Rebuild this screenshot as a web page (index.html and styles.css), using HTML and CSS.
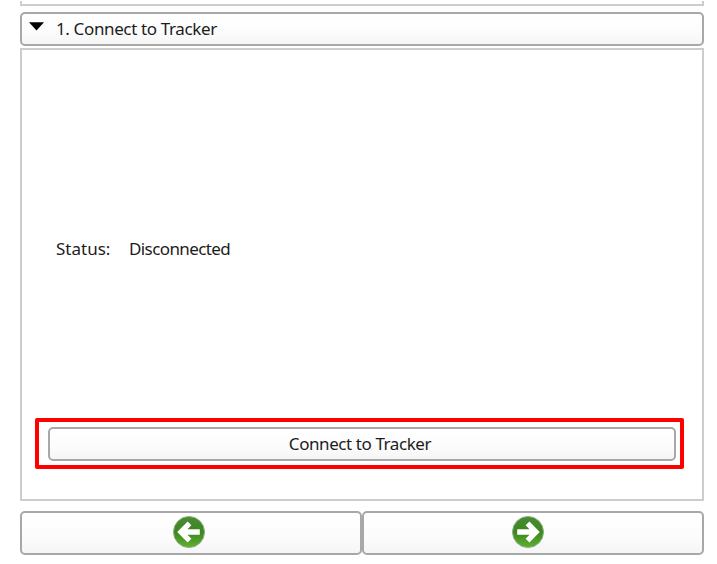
FILE: index.html
```html
<!DOCTYPE html>
<html lang="en">
<head>
<meta charset="utf-8">
<title>Connect to Tracker</title>
<link rel="stylesheet" href="styles.css">
</head>
<body>
<main class="wizard">
  <div class="previous-panel"></div>
  <button class="box header">
    <svg class="caret" width="15" height="9" viewBox="0 0 15 9"><path d="M0 .3h15L7.5 8.5z"/></svg>
    <span class="label title">1. Connect to Tracker</span>
  </button>
  <section class="panel">
    <div class="status">
      <span class="label status-name">Status:</span>
      <span class="label status-value">Disconnected</span>
    </div>
    <div class="highlight">
      <button class="box connect"><span class="label">Connect to Tracker</span></button>
    </div>
  </section>
  <nav class="navigation">
    <button class="box nav-button" aria-label="Previous">
      <svg class="arrow" width="34" height="34" viewBox="0 0 34 34">
        <defs><linearGradient id="green" x2="0" y2="1"><stop stop-color="#4a8a34"/><stop offset=".5" stop-color="#3b871e"/><stop offset="1" stop-color="#60b032"/></linearGradient></defs>
        <circle cx="17" cy="17" r="15.5" fill="url(#green)" stroke="#8fae82"/>
        <path d="M5.2 17 15.6 6.6l3.8 3.6-3.9 4h12.3v5.6H15.5l3.9 4-3.8 3.6z" fill="#fff"/>
      </svg>
    </button>
    <button class="box nav-button" aria-label="Next">
      <svg class="arrow" width="34" height="34" viewBox="0 0 34 34">
        <circle cx="17" cy="17" r="15.5" fill="url(#green)" stroke="#8fae82"/>
        <path d="M28.8 17 18.4 6.6l-3.8 3.6 3.9 4H6.2v5.6h12.3l-3.9 4 3.8 3.6z" fill="#fff"/>
      </svg>
    </button>
  </nav>
</main>
</body>
</html>
```
FILE: styles.css
```css
* { box-sizing: border-box; }
body { margin: 0; background: #fff; overflow: hidden; }
.wizard {
  width: 717px;
  height: 564px;
  padding: 1px 13px 0 20px;
  display: flex;
  flex-direction: column;
  color: #1c1c1c;
  font: 17px/24px "Noto Sans", sans-serif;
}
.previous-panel {
  height: 5px;
  margin-bottom: 6px;
  border: solid #cdcdcd;
  border-width: 0 2px 2px;
}
.box {
  margin: 0;
  padding: 0;
  border: 2px solid #a8a8a8;
  border-radius: 5px;
  background: linear-gradient(#fff, #fcfcfc 60%, #f5f5f5);
  color: inherit;
  font: inherit;
  display: flex;
  align-items: center;
}
.label { white-space: nowrap; letter-spacing: -0.42px; }
.header { height: 34px; padding-left: 7px; }
.caret { margin-top: -6px; }
.title { margin-left: 12px; letter-spacing: -0.37px; }
.panel {
  height: 453px;
  margin-top: 2px;
  padding: 0 18px 30px 13px;
  border: 2px solid #cdcdcd;
  display: flex;
  flex-direction: column;
}
.status { flex: 1; display: flex; align-items: center; padding: 30px 0 0 21px; }
.status-name { width: 73px; letter-spacing: 0; }
.status-value { letter-spacing: -0.6px; }
.highlight { height: 51px; padding: 5px 4px 4px 9px; border: 4px solid #f00; border-radius: 2px; }
.connect { width: 100%; height: 34px; padding-right: 4px; justify-content: center; }
.navigation { display: flex; margin-top: 10px; }
.nav-button { flex: 1; height: 44px; padding-bottom: 2px; justify-content: center; }
.arrow { display: block; margin-right: 4px; }
.nav-button + .nav-button .arrow { margin-right: 10px; }
```
